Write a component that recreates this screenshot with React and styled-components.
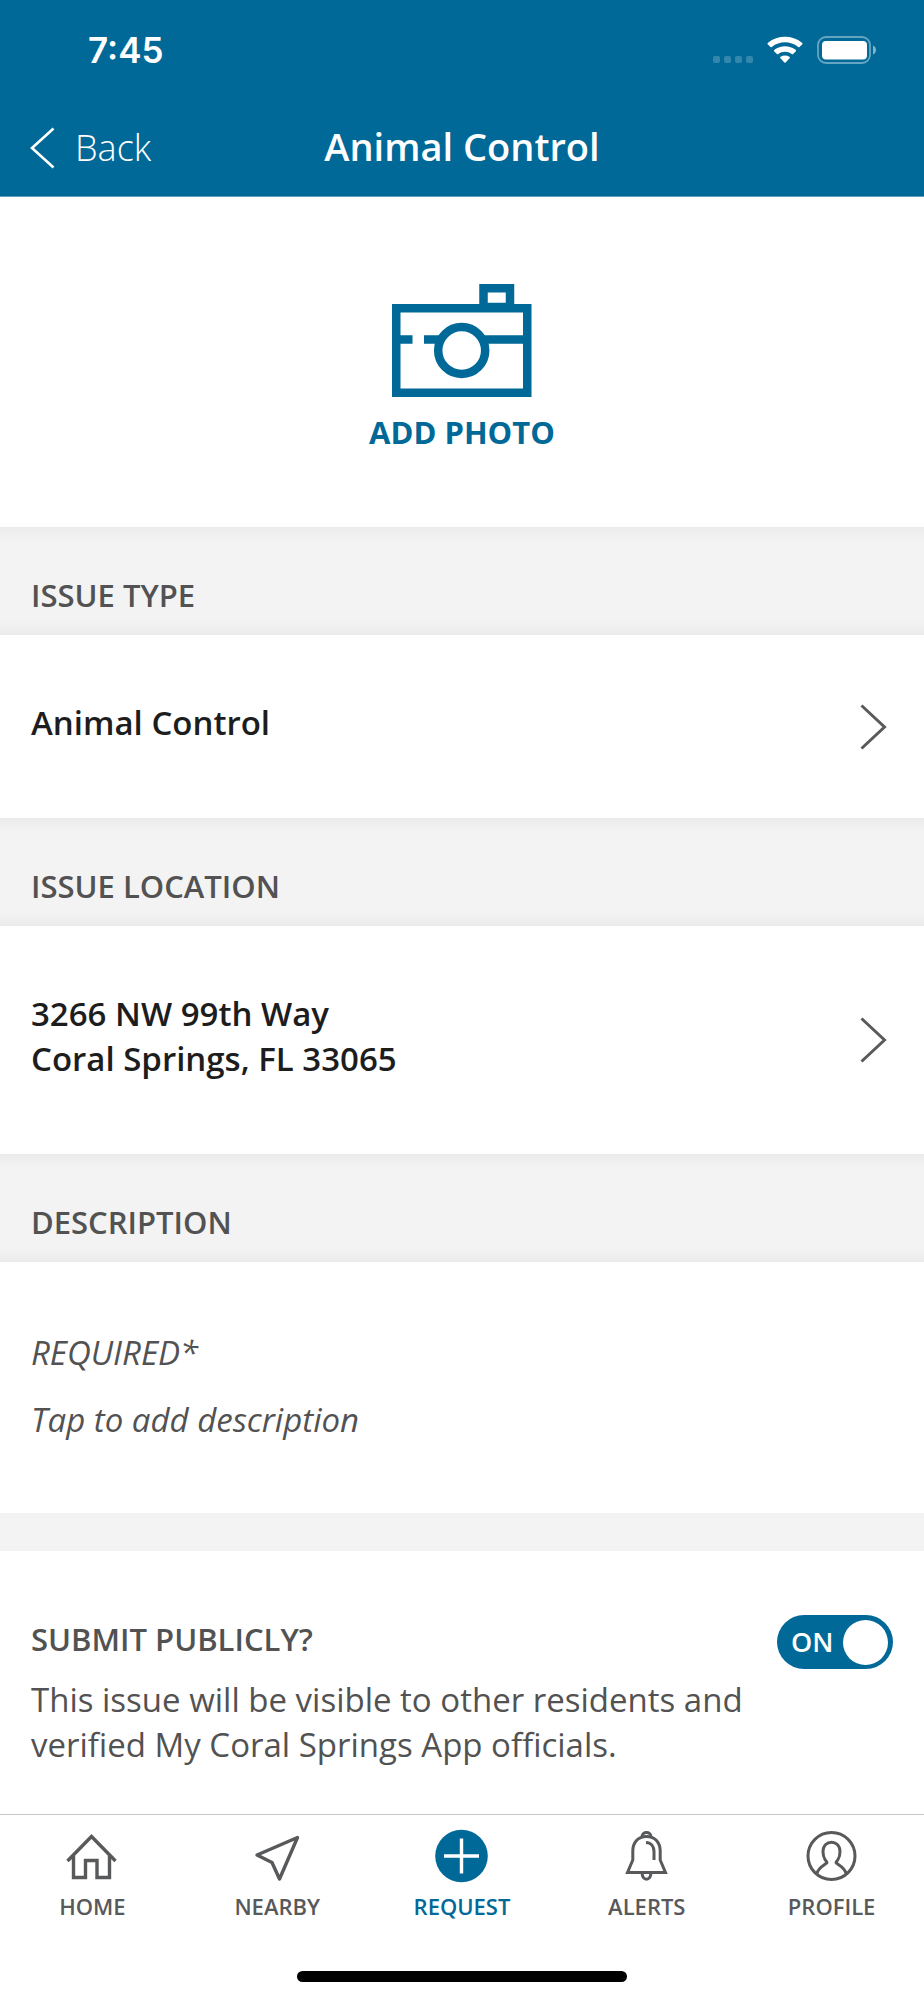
import React, { useState } from "react";
import styled, { createGlobalStyle } from "styled-components";

const tabs = [
  { id: "home", label: "HOME" },
  { id: "nearby", label: "NEARBY" },
  { id: "request", label: "REQUEST" },
  { id: "alerts", label: "ALERTS" },
  { id: "profile", label: "PROFILE" },
];

const WifiIcon = () => (
  <svg width="36" height="28" viewBox="0 0 36 28" fill="#fff" aria-hidden="true">
    <path d="M1 8.5 Q0 7.700 1 6.700 C11-1.200 25-1.200 35 6.700 Q36 7.700 35 8.500 L32.500 11 Q32 11.500 31.200 10.900 C23.500 4.800 12.500 4.800 4.800 10.900 Q4 11.500 3.500 11 Z" />
    <path d="M7.300 15.400 Q6.500 14.600 7.400 13.800 C13.500 8.900 22.500 8.900 28.600 13.800 Q29.500 14.600 28.700 15.400 L26.100 18 Q25.500 18.500 24.700 17.900 C20.700 15 15.300 15 11.300 17.900 Q10.500 18.500 9.900 18 Z" />
    <path d="M13.400 22.200 Q12.600 21.400 13.600 20.700 C16.200 19 19.800 19 22.400 20.700 Q23.400 21.400 22.600 22.200 L18.600 26.500 Q18 27.100 17.400 26.500 Z" />
  </svg>
);

const BatteryIcon = () => (
  <svg width="60" height="28" viewBox="0 0 60 28" aria-hidden="true">
    <rect x="1" y="1" width="52" height="26" rx="8" fill="none" stroke="#fff" strokeWidth="1.8" opacity="0.4" />
    <rect x="5" y="5" width="45" height="18.500" rx="4" fill="#fff" />
    <path d="M56 9.500 C60 11 60 17 56 18.500 Z" fill="#fff" opacity="0.5" />
  </svg>
);

const BackIcon = () => (
  <svg width="25" height="42" viewBox="0 0 25 42" fill="none" aria-hidden="true">
    <path d="M23.500 1.500 L2 21 L23.500 40.500" stroke="#fff" strokeWidth="2.6" />
  </svg>
);

const ChevronIcon = () => (
  <svg width="28" height="46" viewBox="0 0 28 46" fill="none" aria-hidden="true">
    <path d="M1.500 1.500 L24.500 23 L1.500 44.500" stroke="#5a5a5a" strokeWidth="3" />
  </svg>
);

const CameraIcon = () => (
  <svg width="140" height="113" viewBox="0 0 140 113" fill="none" stroke="#006998" strokeWidth="8.500" aria-hidden="true">
    <path d="M4.250 24.200 H135.250 V108.700 H4.250 Z" />
    <path d="M91.500 24 V4.250 H118 V24" />
    <path d="M4 55.500 H20.500 M32 55.500 H48 M92 55.500 H135" />
    <circle cx="69.700" cy="66.500" r="23.500" />
    <path d="M95 19.500 H115" strokeWidth="1.500" />
  </svg>
);

const TabIcon = ({ name }) => {
  const shapes = {
    home: (
      <g fill="none" stroke="#58595b" strokeWidth="3.400">
        <path d="M2.500 34 L26.500 9.500 L50.500 34" />
        <path d="M8.500 29 V50.500 H20.500 V33.500 H32 V50.500 H44.500 V29" />
      </g>
    ),
    nearby: (
      <path
        d="M47.500 10.500 L7 28 L22 35.500 L29.500 52 Z"
        fill="none"
        stroke="#58595b"
        strokeWidth="3.400"
        strokeLinejoin="round"
      />
    ),
    request: (
      <g>
        <circle cx="26.500" cy="29" r="26.300" fill="#006998" />
        <path d="M26.500 11.500 V46.500 M9 29 H44" stroke="#fff" strokeWidth="3.400" />
      </g>
    ),
    alerts: (
      <g fill="none" stroke="#58595b" strokeWidth="3">
        <path d="M22 9.800 C22 4 31 4 31 9.800" />
        <path d="M26.500 9.500 C17.500 9.500 12.800 16 12.800 24 V33 L7.500 45.500 H45.500 L40.200 33 V24 C40.200 16 35.500 9.500 26.500 9.500 Z" />
        <path d="M26 15.500 C31.500 15.800 34 20 34 24.500 V33" />
        <path d="M22.200 46 C21.700 54.300 31.300 54.300 30.800 46" />
      </g>
    ),
    profile: (
      <g fill="none" stroke="#58595b" strokeWidth="3">
        <circle cx="26.500" cy="29" r="23.500" />
        <path d="M12 46.500 C13 41 17.500 39 21.800 36 C22.500 35.500 21 34 20 32.500 C18 29.500 18 26.500 18 24.500 C18 12 35 12 35 24.500 C35 26.500 35 29.500 33 32.500 C32 34 30.500 35.500 31.200 36 C35.500 39 40 41 41 46.500" />
      </g>
    ),
  };
  return (
    <svg width="54" height="58" viewBox="0 0 54 58" aria-hidden="true">
      {shapes[name]}
    </svg>
  );
};

const App = () => {
  const [isPublic, setIsPublic] = useState(true);
  const [activeTab, setActiveTab] = useState("request");

  return (
    <Screen>
      <GlobalStyle />

      <Header>
        <StatusBar>
          <Clock>7:45</Clock>
          <StatusIcons>
            <SignalDots>
              <i />
              <i />
              <i />
              <i />
            </SignalDots>
            <WifiIcon />
            <BatteryIcon />
          </StatusIcons>
        </StatusBar>
        <NavBar>
          <BackButton type="button">
            <BackIcon />
            Back
          </BackButton>
          <Title>Animal Control</Title>
        </NavBar>
      </Header>

      <Content>
        <PhotoButton type="button">
          <CameraIcon />
          ADD PHOTO
        </PhotoButton>

        <SectionLabel>ISSUE TYPE</SectionLabel>
        <RowButton type="button">
          <RowText>Animal Control</RowText>
          <ChevronIcon />
        </RowButton>

        <SectionLabel>ISSUE LOCATION</SectionLabel>
        <RowButton type="button">
          <RowText>
            3266 NW 99th Way
            <br />
            Coral Springs, FL 33065
          </RowText>
          <ChevronIcon />
        </RowButton>

        <SectionLabel id="description-label">DESCRIPTION</SectionLabel>
        <Description>
          <Required>REQUIRED*</Required>
          <DescriptionInput
            type="text"
            aria-labelledby="description-label"
            placeholder="Tap to add description"
          />
        </Description>

        <Divider />

        <PublicSection>
          <PublicRow>
            <PublicLabel htmlFor="public">SUBMIT PUBLICLY?</PublicLabel>
            <Switch $on={isPublic}>
              <input
                id="public"
                type="checkbox"
                role="switch"
                checked={isPublic}
                onChange={(e) => setIsPublic(e.target.checked)}
              />
              <span>{isPublic ? "ON" : "OFF"}</span>
              <Knob />
            </Switch>
          </PublicRow>
          <PublicText>
            This issue will be visible to other residents and verified My Coral
            Springs App officials.
          </PublicText>
        </PublicSection>
      </Content>

      <TabBar>
        {tabs.map((tab) => (
          <TabButton
            key={tab.id}
            type="button"
            $active={tab.id === activeTab}
            onClick={() => setActiveTab(tab.id)}
          >
            <TabIcon name={tab.id} />
            {tab.label}
          </TabButton>
        ))}
      </TabBar>
      <HomeIndicator />
    </Screen>
  );
};

const GlobalStyle = createGlobalStyle`
  * {
    box-sizing: border-box;
  }

  body {
    margin: 0;
    background: #fff;
    color: #525252;
    font-family: "Open Sans", "Noto Sans", sans-serif;
  }

  button, input {
    margin: 0;
    padding: 0;
    border: 0;
    background: none;
    color: inherit;
    font: inherit;
    cursor: pointer;
  }

  svg {
    display: block;
    flex-shrink: 0;
  }
`;

const Screen = styled.div`
  display: flex;
  flex-direction: column;
  min-height: 100vh;
`;

const Header = styled.header`
  background: #006998;
  color: #fff;
  border-bottom: 1px solid #5a9fbf;
`;

const StatusBar = styled.div`
  display: flex;
  justify-content: space-between;
  align-items: center;
  height: 100px;
  padding: 0 47px 0 88px;
`;

const Clock = styled.time`
  font-family: Inter, sans-serif;
  font-size: 35px;
  font-weight: 600;
`;

const StatusIcons = styled.div`
  display: flex;
  align-items: center;
  gap: 14px;
`;

const SignalDots = styled.div`
  display: flex;
  align-self: flex-end;
  gap: 4px;
  padding-bottom: 1px;

  i {
    width: 7px;
    height: 7px;
    border-radius: 2px;
    background: #fff;
    opacity: 0.2;
  }
`;

const NavBar = styled.div`
  display: grid;
  grid-template-columns: 1fr auto 1fr;
  align-items: center;
  height: 96px;
  padding: 0 30px;
`;

const BackButton = styled.button`
  display: flex;
  align-items: center;
  gap: 20px;
  font-size: 36px;
  font-weight: 300;
  line-height: 48px;
`;

const Title = styled.h1`
  margin: 0;
  padding-bottom: 4px;
  font-size: 38px;
  font-weight: 600;
  line-height: 48px;
`;

const Content = styled.main`
  flex: 1;
  display: flex;
  flex-direction: column;
`;

const PhotoButton = styled.button`
  display: flex;
  flex-direction: column;
  align-items: center;
  gap: 15px;
  padding: 87px 31px 75px;
  color: #006998;
  font-size: 31px;
  font-weight: 700;
  line-height: 40px;
`;

const SectionLabel = styled.h2`
  margin: 0;
  padding: 48px 31px 20px;
  background: #f3f3f3;
  box-shadow:
    inset 0 20px 18px -18px rgba(0, 0, 0, 0.06),
    inset 0 -20px 18px -18px rgba(0, 0, 0, 0.06);
  font-size: 31px;
  font-weight: 600;
  line-height: 40px;
`;

const RowButton = styled.button`
  display: flex;
  justify-content: space-between;
  align-items: center;
  padding: 65px 36px 65px 31px;
  color: #1d1d1d;
  font-size: 33px;
  font-weight: 600;
  line-height: 45px;
  text-align: left;
`;

const RowText = styled.span`
  padding-bottom: 8px;
`;

const Description = styled.div`
  display: flex;
  flex-direction: column;
  gap: 22px;
  padding: 68px 31px 71px;
  font-size: 33px;
  font-style: italic;
  line-height: 45px;
`;

const Required = styled.p`
  margin: 0;
`;

const DescriptionInput = styled.input`
  height: 45px;

  &::placeholder {
    color: #525252;
    opacity: 1;
  }
`;

const Divider = styled.div`
  height: 38px;
  background: #f3f3f3;
`;

const PublicSection = styled.section`
  display: flex;
  flex-direction: column;
  gap: 8px;
  padding: 64px 31px 32px;
`;

const PublicRow = styled.div`
  display: flex;
  justify-content: space-between;
  align-items: center;
`;

const PublicLabel = styled.label`
  padding-bottom: 6px;
  font-size: 31px;
  font-weight: 600;
  line-height: 40px;
`;

const Switch = styled.label`
  position: relative;
  display: flex;
  flex-direction: ${({ $on }) => ($on ? "row" : "row-reverse")};
  justify-content: space-between;
  align-items: center;
  width: 116px;
  height: 54px;
  padding: 0 5px 0 14px;
  border-radius: 27px;
  background: ${({ $on }) => ($on ? "#006998" : "#8a8a8a")};
  color: #fff;
  font-size: 27px;
  font-weight: 600;
  line-height: 54px;

  input {
    position: absolute;
    inset: 0;
    opacity: 0;
  }
`;

const Knob = styled.span`
  width: 45px;
  height: 45px;
  border-radius: 50%;
  background: #fff;
`;

const PublicText = styled.p`
  max-width: 740px;
  margin: 0;
  font-size: 33px;
  line-height: 45px;
`;

const TabBar = styled.nav`
  display: grid;
  grid-template-columns: repeat(5, 1fr);
  padding-top: 12px;
  border-top: 1px solid #c8c8c8;
`;

const TabButton = styled.button`
  display: flex;
  flex-direction: column;
  align-items: center;
  gap: 5px;
  color: ${({ $active }) => ($active ? "#006998" : "#58595b")};
  font-size: 22px;
  font-weight: 600;
  line-height: 32px;
`;

const HomeIndicator = styled.div`
  align-self: center;
  width: 330px;
  height: 11px;
  margin: 49px 0 18px;
  border-radius: 6px;
  background: #000;
`;

export default App;
